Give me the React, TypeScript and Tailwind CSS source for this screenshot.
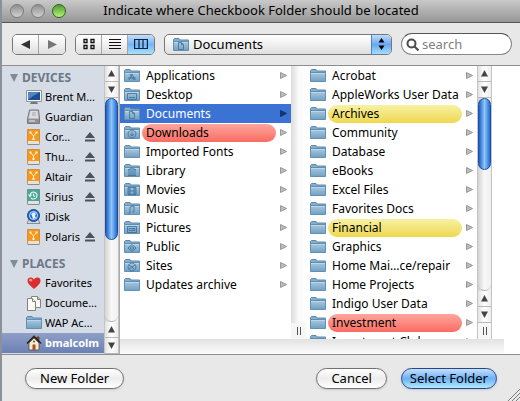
import { useState, type ReactNode } from "react";

type Entry = { name: string; mark?: string; tag?: "red" | "yellow" };
type Place = { name: string; icon: ReactNode; eject?: boolean };

const folders: Entry[] = [
  { name: "Applications", mark: "M6 11l3-6 3 6M5 9h8M7 5l4 6" },
  { name: "Desktop", mark: "M4.5 5.5h9v6h-9zM6 9.500h6" },
  { name: "Documents", mark: "M6.500 4.500h3l2 2v5h-5zM9.500 4.500v2h2" },
  { name: "Downloads", mark: "M9 4a4 4 0 1 0 .01 0M9 5.500v4M7 8l2 2 2-2", tag: "red" },
  { name: "Imported Fonts" },
  { name: "Library", mark: "M5 6l4-2 4 2zM6 7v4M8 7v4M10 7v4M12 7v4M5 11.500h8" },
  { name: "Movies", mark: "M5 4.500h8v7H5zM7 4.500v7M11 4.500v7M5 8h8M5 6h2M5 10h2M11 6h2M11 10h2" },
  { name: "Music", mark: "M7 11V5l4-1v6M5.500 11H7M9.500 10H11" },
  { name: "Pictures", mark: "M4.500 5.500h9v6h-9zM6 7.500h6v2H6zM10 7.500v2" },
  { name: "Public", mark: "M9 4.500l4 3.500-4 3.500L5 8zM9 6.500l2 1.500-2 1.500L7 8z" },
  { name: "Sites", mark: "M9 4a4 4 0 1 0 .01 0M6 6l3 2 3-2M6 10l3-2 2 2" },
  { name: "Updates archive" },
];

const documents: Entry[] = [
  { name: "Acrobat" },
  { name: "AppleWorks User Data" },
  { name: "Archives", tag: "yellow" },
  { name: "Community" },
  { name: "Database" },
  { name: "eBooks" },
  { name: "Excel Files" },
  { name: "Favorites Docs" },
  { name: "Financial", tag: "yellow" },
  { name: "Graphics" },
  { name: "Home Mai…ce/repair" },
  { name: "Home Projects" },
  { name: "Indigo User Data" },
  { name: "Investment", tag: "red" },
  { name: "Investment Clubs" },
];

const tagColors = {
  red: "bg-linear-to-b from-[#fda59d] to-[#f96b62]",
  yellow: "bg-linear-to-b from-[#f8f1a0] to-[#eed84c]",
};

function FolderIcon({ mark }: { mark?: string }) {
  return (
    <svg className="w-4 h-4 shrink-0" viewBox="0 0 16 16" fill="none">
      <path d="M.5 5V2.500L1.500 1.500h4.500l1 1.500h8.500v2z" fill="#84aecb" stroke="#5e8aad" />
      <path d="M.5 4.500h15v9H.5z" fill="url(#folder)" stroke="#6190b4" />
      <path d="M1 5.500h14" stroke="#bcd6e8" />
      {mark && <path d={mark} stroke="#3d6f97" strokeWidth="0.8" transform="translate(-1 1)" />}
    </svg>
  );
}

function ComputerIcon() {
  return (
    <svg className="w-4 h-4" viewBox="0 0 16 16">
      <path d="M5 13h6l1 2H4z" fill="#777" />
      <path d="M.5 1.500h15v11H.5z" fill="#f4f5f6" stroke="#8c949c" />
      <path d="M2 3h12v8H2z" fill="#1e4d92" />
      <path d="M2 3h12L7 7l-5 4z" fill="#4d86c6" />
    </svg>
  );
}

function HardDriveIcon() {
  return (
    <svg className="w-4 h-4" viewBox="0 0 16 16">
      <path d="M3.500 1h9l1 8v5.500h-12V10z" fill="#b9b9bd" stroke="#77777c" />
      <path d="M4.500 2h7l.6 7H3z" fill="#dedee1" />
      <path d="M2 10h11v4H2z" fill="#909096" />
      <path d="M3 12h6" stroke="#eee" />
      <path d="M6 4h4M6 6h4" stroke="#a5a5aa" />
    </svg>
  );
}

function ExternalDriveIcon() {
  return (
    <svg className="w-4 h-4" viewBox="0 0 16 16">
      <path d="M1.500.5h12v14h-12z" fill="#f7981d" stroke="#cf8e3c" />
      <path d="M2 12h11v3H2z" fill="#e2e2de" />
      <path d="M1.500 15.500h12" stroke="#8d8d88" />
      <path d="M7.500 10V7M4.500 3.500l3 3.500 3-3.500" stroke="#fff3d8" fill="none" />
      <path d="M3.500 2.500h2v2h-2zM9.500 2.500h2v2h-2zM6.500 9h2v2h-2z" fill="#fff3d8" />
    </svg>
  );
}

function BackupDriveIcon() {
  return (
    <svg className="w-4 h-4" viewBox="0 0 16 16" fill="none">
      <path d="M1.500.5h12v14h-12z" fill="#4da59a" stroke="#6b948f" />
      <path d="M2 12h11v3H2z" fill="#e2e2de" />
      <path d="M1.500 15.500h12" stroke="#8d8d88" />
      <path d="M4 6.500a3.500 3.500 0 1 1 1 2.500M2.500 5.500L4 7.500l1.500-2M7.500 4.500v2.200l1.500.8" stroke="#e5fbf6" strokeWidth="1.100" />
    </svg>
  );
}

function IDiskIcon() {
  return (
    <svg className="w-4 h-4" viewBox="0 0 16 16">
      <path d="M3 10h9l2 4.500H1z" fill="#d5d8dc" stroke="#888d95" />
      <circle cx="7.500" cy="6.500" r="6" fill="#2366c5" stroke="#174a97" />
      <circle cx="7.500" cy="6.500" r="4" fill="none" stroke="#cfe2fa" />
      <path d="M5 5l3-2 2 2-1 2 1 2-3 1-1-3z" fill="#e4f0ff" />
    </svg>
  );
}

function HeartIcon() {
  return (
    <svg className="w-4 h-4" viewBox="0 0 16 16">
      <path d="M8 14C5 11 1.500 9 1.500 5.500 1.500 2 6 1.500 8 4.500c2-3 6.500-2.500 6.500 1C14.500 9 11 11 8 14z" fill="#dc2d2f" />
      <path d="M3 5.500C3 3.500 5.500 3 6.500 5 6 6.500 4 7.500 3 5.500z" fill="#f79a94" />
    </svg>
  );
}

function PagesIcon() {
  return (
    <svg className="w-4 h-4" viewBox="0 0 16 16" fill="#fbfaf4" stroke="#85827a">
      <path d="M5.500 1.500h6l3 3v8h-9z" />
      <path d="M11.500 1.500v3h3" fill="#c9d5a8" />
      <path d="M1.500 3.500h5l3 3v9h-8z" />
      <path d="M6.500 3.500v3h3" />
    </svg>
  );
}

function HomeIcon() {
  return (
    <svg className="w-4 h-4" viewBox="0 0 16 16">
      <path d="M11 2h2v5h-2z" fill="#b03a22" stroke="#33271f" strokeWidth="0.600" />
      <path d="M3 8l5-5 5 5v7H3z" fill="#f6ecd1" stroke="#5d4c38" strokeWidth="0.800" />
      <path d="M1 8.500l7-7 7 7" fill="none" stroke="#2c221c" strokeWidth="1.600" />
      <path d="M6.500 9.500h3V15h-3z" fill="#a6502a" />
      <circle cx="8" cy="6.500" r="1" fill="#6a5136" />
    </svg>
  );
}

const devices: Place[] = [
  { name: "Brent M…", icon: <ComputerIcon /> },
  { name: "Guardian", icon: <HardDriveIcon /> },
  { name: "Cor…", icon: <ExternalDriveIcon />, eject: true },
  { name: "Thu…", icon: <ExternalDriveIcon />, eject: true },
  { name: "Altair", icon: <ExternalDriveIcon />, eject: true },
  { name: "Sirius", icon: <BackupDriveIcon />, eject: true },
  { name: "iDisk", icon: <IDiskIcon /> },
  { name: "Polaris", icon: <ExternalDriveIcon />, eject: true },
];

const places: Place[] = [
  { name: "Favorites", icon: <HeartIcon /> },
  { name: "Docume…", icon: <PagesIcon /> },
  { name: "WAP Ac…", icon: <FolderIcon /> },
  { name: "bmalcolm", icon: <HomeIcon /> },
];

function PlaceGroup({ title, items, current }: { title: string; items: Place[]; current?: string }) {
  return (
    <section>
      <h2 className="flex items-center gap-1 h-[18px] pl-2 text-[12px] font-bold text-[#6d7889]">
        <svg className="w-2 h-2" viewBox="0 0 8 8">
          <path d="M0 0h8L4 8z" fill="#7f8a9b" />
        </svg>
        {title}
      </h2>
      <ul className="text-[11px]">
        {items.map((item) => (
          <li
            key={item.name}
            className={
              item.name === current
                ? "flex items-center h-5 pl-6 pr-2 bg-linear-to-b from-[#8f9fc8] to-[#6b80b3] font-bold text-white"
                : "flex items-center h-5 pl-6 pr-2"
            }
          >
            <button className="flex flex-1 items-center gap-[3px] whitespace-nowrap">
              {item.icon}
              {item.name}
            </button>
            {item.eject && (
              <button aria-label={`Eject ${item.name}`}>
                <svg className="w-3 h-3" viewBox="0 0 12 12" fill="#4b525c">
                  <path d="M6 1l5 6H1zM1 8.500h10v2H1z" />
                </svg>
              </button>
            )}
          </li>
        ))}
      </ul>
    </section>
  );
}

function Arrow({ up }: { up?: boolean }) {
  return (
    <button
      aria-label={up ? "Scroll up" : "Scroll down"}
      className="flex items-center justify-center h-4 shrink-0 border-b border-[#b9b9b9] bg-linear-to-r from-[#e2e2e2] via-white to-[#ececec]"
    >
      <svg className="w-[7px] h-[7px]" viewBox="0 0 7 7" fill="#444">
        <path d={up ? "M3.500 0L7 6.500H0z" : "M0 .5h7L3.500 7z"} />
      </svg>
    </button>
  );
}

function Grip() {
  return (
    <div className="flex items-center justify-center gap-0.5 h-4 shrink-0 bg-[#f6f6f6]">
      <span className="w-px h-2 bg-[#555]" />
      <span className="w-px h-2 bg-[#555]" />
    </div>
  );
}

function ScrollBar({ thumb, grip }: { thumb: string; grip?: boolean }) {
  return (
    <div className="flex flex-col w-[15px] shrink-0 border-x border-[#c4c4c4] bg-linear-to-r from-[#d4d4d4] via-[#f8f8f8] to-[#f0f0f0]">
      <Arrow up />
      <Arrow />
      <div className="flex-1 rounded-b-full border-b border-[#aaa]">
        <div
          className={`${thumb} rounded-full border border-[#1c4d9f] bg-linear-to-r from-[#1f5cc0] via-[#8cc8fa] to-[#2368d0]`}
        />
      </div>
      <Arrow up />
      <Arrow />
      {grip && <Grip />}
    </div>
  );
}

function Column({ items, current, onPick }: { items: Entry[]; current?: string; onPick?: (name: string) => void }) {
  return (
    <ul className="w-[171px] shrink-0 overflow-hidden bg-white">
      {items.map(({ name, mark, tag }) => {
        const active = name === current;
        return (
          <li key={name}>
            <button
              onClick={() => onPick?.(name)}
              className={
                active
                  ? "flex items-center w-full h-[19px] pl-1 pr-1 bg-[#3b73d5] text-white"
                  : "flex items-center w-full h-[19px] pl-1 pr-1"
              }
            >
              <FolderIcon mark={mark} />
              <span
                className={`flex-1 h-[18px] ml-0.5 mr-1 pl-1 rounded-full text-left leading-[18px] whitespace-nowrap ${tag ? tagColors[tag] : ""}`}
              >
                {name}
              </span>
              <svg className="w-[7px] h-[7px] shrink-0" viewBox="0 0 7 7">
                <path
                  d="M.5.5L6.500 3.500l-6 3z"
                  fill={active ? "#16356f" : "#bcbcbc"}
                  stroke={active ? "#16356f" : "#999"}
                />
              </svg>
            </button>
          </li>
        );
      })}
    </ul>
  );
}

const pill =
  "h-[21px] rounded-full border border-[#6f6f6f] bg-linear-to-b from-white via-[#ededed] to-white px-3.5 text-[13px] leading-[18px] shadow-sm";
const segment = "flex items-center justify-center w-[26px] bg-linear-to-b from-white via-[#f0f0f0] to-[#dedede]";
const group = "flex h-[21px] overflow-hidden rounded-[5px] border border-[#777] divide-x divide-[#a5a5a5]";

export default function App() {
  const [folder, setFolder] = useState("Documents");

  return (
    <div className="flex flex-col h-screen overflow-hidden border-l-2 border-[#8b909b] bg-[#e8e8e8] font-['Noto_Sans','Open_Sans',sans-serif] text-[12px] text-black">
      {/* Shared folder gradient, has to stay rendered for url(#folder) */}
      <svg className="absolute w-0 h-0">
        <defs>
          <linearGradient id="folder" x1="0" x2="0" y1="0" y2="1">
            <stop offset="0" stopColor="#a9cae0" />
            <stop offset="1" stopColor="#729fc2" />
          </linearGradient>
        </defs>
      </svg>

      {/* Title bar */}
      <header className="grid grid-cols-[64px_1fr_64px] items-center h-[23px] shrink-0 px-2 border-b border-[#555] bg-linear-to-b from-[#c9c9c9] to-[#979797]">
        <div className="flex gap-[7px]">
          <button aria-label="Close" className="size-3.5 rounded-full border border-[#7b7b7b] bg-linear-to-b from-[#8f8f8f] to-[#d2d2d2]" />
          <button aria-label="Minimize" className="size-3.5 rounded-full border border-[#7b7b7b] bg-linear-to-b from-[#8f8f8f] to-[#d2d2d2]" />
          <button aria-label="Zoom" className="size-3.5 rounded-full border border-[#2c6316] bg-linear-to-b from-[#4f9a31] to-[#b5f578]" />
        </div>
        <h1 className="text-center text-[13px] whitespace-nowrap">Indicate where Checkbook Folder should be located</h1>
      </header>

      {/* Toolbar */}
      <div className="flex items-center gap-[9px] h-[43px] shrink-0 pl-2.5 pr-2 border-b border-[#8f8f8f]">
        <div className={group}>
          <button aria-label="Back" className={segment}>
            <svg className="w-[9px] h-[9px]" viewBox="0 0 9 9" fill="#333">
              <path d="M9 0v9L0 4.500z" />
            </svg>
          </button>
          <button aria-label="Forward" className={segment}>
            <svg className="w-[9px] h-[9px]" viewBox="0 0 9 9" fill="#777">
              <path d="M0 0v9l9-4.500z" />
            </svg>
          </button>
        </div>

        <div className={group}>
          <button aria-label="Icon view" className={segment}>
            <svg className="w-3 h-3" viewBox="0 0 12 12" fill="none" stroke="#111" strokeWidth="1.300">
              <path d="M1 1.500h3v3H1zM8 1.500h3v3H8zM1 7.500h3v3H1zM8 7.500h3v3H8z" />
            </svg>
          </button>
          <button aria-label="List view" className={segment}>
            <svg className="w-3 h-3" viewBox="0 0 12 12" stroke="#111">
              <path d="M0 1.500h12M0 4.500h12M0 7.500h12M0 10.500h12" />
            </svg>
          </button>
          <button
            aria-label="Column view"
            className="flex items-center justify-center w-[26px] bg-linear-to-b from-[#c3defa] via-[#75b5f5] to-[#a9e0ff]"
          >
            <svg className="w-[14px] h-3" viewBox="0 0 14 12" fill="none" stroke="#0c2340" strokeWidth="1.200">
              <path d="M.6 1.500h12.800v9H.6zM5 1.500v9M9 1.500v9" />
            </svg>
          </button>
        </div>

        <div className="relative flex flex-1 h-[21px] overflow-hidden rounded-[5px] border border-[#777] bg-linear-to-b from-white via-[#f0f0f0] to-[#dedede]">
          <select
            aria-label="Folder"
            value={folder}
            onChange={(e) => setFolder(e.target.value)}
            className="flex-1 appearance-none pl-7 text-[13px] leading-[18px]"
          >
            {folders.map(({ name }) => (
              <option key={name}>{name}</option>
            ))}
          </select>
          <span className="absolute left-2 top-0.5 pointer-events-none">
            <FolderIcon mark={folders[2].mark} />
          </span>
          <span className="flex items-center justify-center w-5 pointer-events-none border-l border-[#4e83c9] bg-linear-to-b from-[#bfdcfa] via-[#67a9f0] to-[#a5dcff]">
            <svg className="w-[7px] h-3" viewBox="0 0 7 12">
              <path d="M3.500 0L6.500 4.500h-6zM3.500 12l3-4.500h-6z" />
            </svg>
          </span>
        </div>

        <label className="flex items-center gap-[3px] w-[111px] h-[22px] px-1 rounded-full border border-[#888] border-t-[#555] bg-white">
          <svg className="w-[13px] h-[13px] shrink-0" viewBox="0 0 13 13" fill="none" stroke="#4a4a4a" strokeWidth="2">
            <circle cx="5.500" cy="5.500" r="4" />
            <path d="M8.500 8.500l4 4" />
          </svg>
          <input
            type="search"
            aria-label="Search"
            placeholder="search"
            className="w-full min-w-0 text-[13px] leading-[18px] outline-none placeholder:text-[#808080]"
          />
        </label>
      </div>

      {/* Browser */}
      <main className="flex flex-1 min-h-0 bg-white">
        <nav aria-label="Sidebar" className="flex flex-col gap-2 w-[102px] shrink-0 overflow-hidden pt-[3px] bg-[#d5dce5]">
          <PlaceGroup title="DEVICES" items={devices} />
          <PlaceGroup title="PLACES" items={places} current="bmalcolm" />
        </nav>
        <ScrollBar thumb="h-[142px]" />

        <div className="flex flex-col flex-1 min-w-0 border-l border-[#aaa]">
          <div className="flex flex-1 min-h-0 overflow-hidden">
            <Column items={folders} current={folder} onPick={setFolder} />
            <div className="flex flex-col justify-end w-[15px] shrink-0 bg-linear-to-r from-[#dcdcdc] via-[#fafafa] to-white">
              <Grip />
            </div>
            <Column items={documents} />
            <ScrollBar thumb="h-[72px]" grip />
          </div>
          <div className="h-[15px] mr-4 shrink-0 bg-linear-to-b from-[#e2e2e2] to-[#fcfcfc]" />
        </div>
      </main>

      {/* Actions */}
      <footer className="relative flex items-center gap-3.5 h-[47px] shrink-0 pl-[23px] pr-[23px] border-t border-[#8f8f8f]">
        <button className={`${pill} mr-auto`}>New Folder</button>
        <button className={pill}>Cancel</button>
        <button className="h-[21px] rounded-full border border-[#24468e] bg-linear-to-b from-[#c6e0fb] via-[#6db0f4] to-[#b4ebff] px-2 text-[13px] leading-[18px] shadow-sm">
          Select Folder
        </button>
        <svg className="absolute right-0 bottom-0 w-3 h-3" viewBox="0 0 12 12" stroke="#7c7c7c">
          <path d="M0 12L12 0M4 12l8-8M8 12l4-4" />
        </svg>
      </footer>
    </div>
  );
}
